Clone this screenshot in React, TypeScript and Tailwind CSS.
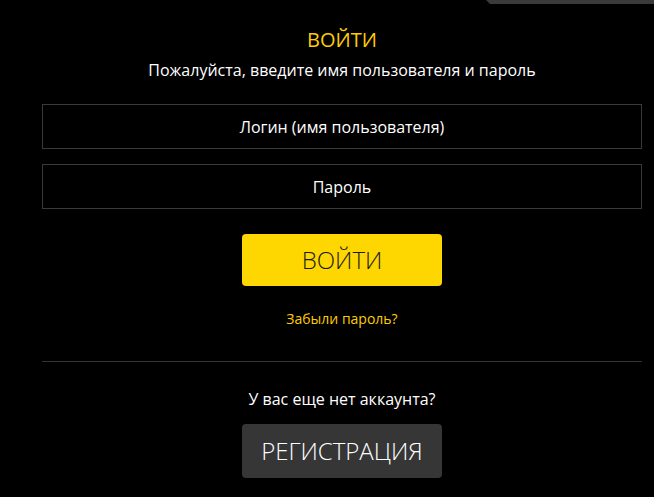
export default function App() {
  return (
    <div className="relative min-h-[497px] w-full bg-black font-['Open_Sans',sans-serif] text-white">
      {/* edge of a panel peeking in at the top */}
      <div className="absolute right-0 top-0 h-[4px] w-[168px] bg-[#3a3a3a] [clip-path:polygon(0_0,100%_0,100%_100%,4px_100%)]" />

      <div className="ml-[42px] flex w-[600px] flex-col items-center pt-[26px]">
        <h1 className="text-[20px] leading-[27px] text-[#ffcc00]">ВОЙТИ</h1>
        <p className="mt-[6px] text-[16px] leading-[22px]">Пожалуйста, введите имя пользователя и пароль</p>

        <input
          placeholder="Логин (имя пользователя)"
          className="mt-[23px] h-[45px] w-full border border-[#3a3a3a] bg-black text-center text-[16px] text-white outline-none placeholder:text-white"
        />
        <input
          type="password"
          placeholder="Пароль"
          className="mt-[15px] h-[45px] w-full border border-[#3a3a3a] bg-black text-center text-[16px] text-white outline-none placeholder:text-white"
        />

        <button className="mt-[25px] h-[52px] w-[200px] rounded-[4px] bg-[#ffd700] text-[24px] font-light text-[#1a1a1a]">
          ВОЙТИ
        </button>

        <a className="mt-[23px] text-[14px] leading-[19px] text-[#ffcc00]">Забыли пароль?</a>

        <div className="mt-[33px] h-px w-full bg-[#333]" />

        <p className="mt-[26px] text-[16px] leading-[22px]">У вас еще нет аккаунта?</p>

        <button className="mt-[14px] h-[54px] w-[200px] rounded-[4px] bg-[#363636] text-[24px] font-light text-white">
          РЕГИСТРАЦИЯ
        </button>
      </div>
    </div>
  );
}
